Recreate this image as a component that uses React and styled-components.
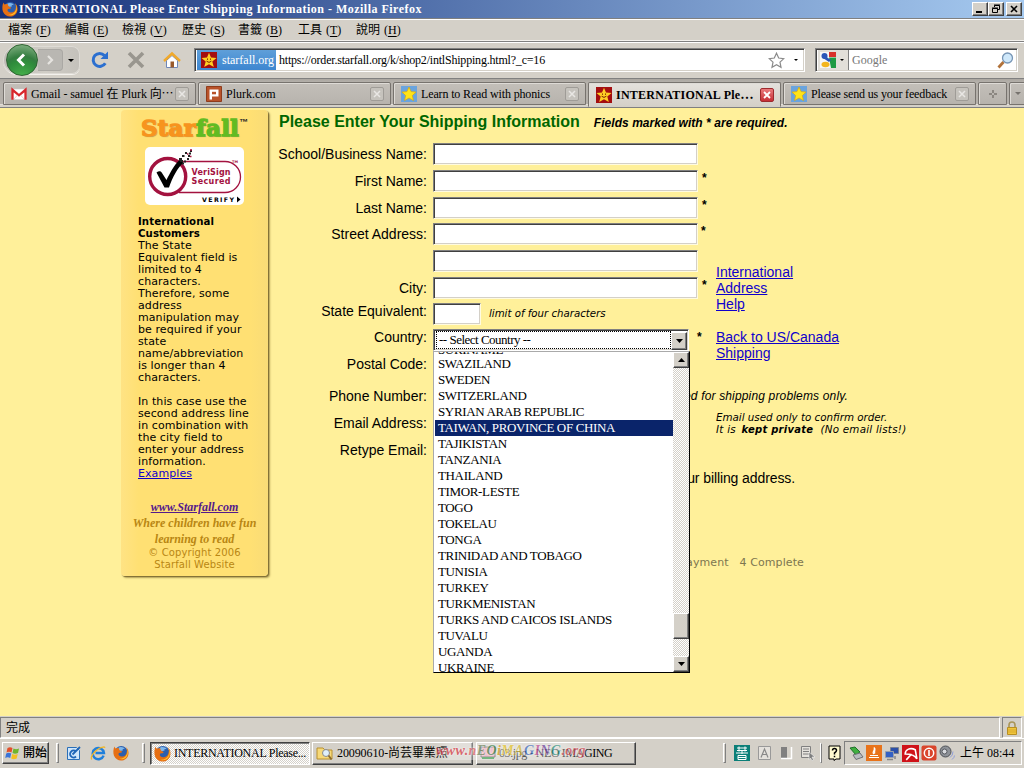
import React from "react";
import styled, { createGlobalStyle, css } from "styled-components";

const SERIF = `"Liberation Serif", "Noto Sans CJK TC", serif`;
const SANS = `"Liberation Sans", "Noto Sans CJK TC", sans-serif`;
const VERDANA = `"DejaVu Sans", "Noto Sans CJK TC", sans-serif`;

const Global = createGlobalStyle`
  * { box-sizing: border-box; }
  html, body { margin: 0; padding: 0; }
  body { width: 1024px; height: 768px; overflow: hidden; background: #d4d0c8; }
  svg { display: block; flex: none; }
`;

const Desktop = styled.div`
  width: 1024px;
  height: 768px;
  display: flex;
  flex-direction: column;
  background: #d4d0c8;
  font: 12px/16px ${SERIF};
  color: #000;
  white-space: nowrap;
  overflow: hidden;
`;

const raised = css`
  border: 1px solid;
  border-color: #fff #404040 #404040 #fff;
  box-shadow: inset -1px -1px 0 #808080;
  background: #d4d0c8;
`;

/* title bar */
const TitleBar = styled.div`
  height: 18px;
  flex: none;
  display: flex;
  align-items: center;
  padding: 0 2px;
  background: linear-gradient(90deg, #16317a, #a6caf0);
  color: #fff;
`;
const TitleText = styled.span`
  flex: 1;
  margin-left: 1px;
  font-weight: bold;
  letter-spacing: 0.48px;
  line-height: 18px;
`;
const CaptionButton = styled.div`
  ${raised}
  width: 16px;
  height: 14px;
  margin-left: ${(p) => p.$gap || 0}px;
  display: flex;
  align-items: center;
  justify-content: center;
`;

/* menu bar */
const MenuBar = styled.div`
  height: 24px;
  flex: none;
  display: flex;
  align-items: center;
  gap: 17px;
  padding-left: 8px;
  border-top: 1px solid #808080;
  border-bottom: 1px solid #808080;
  box-shadow: inset 0 1px 0 #fff, inset 0 -1px 0 #f4f2ee;
`;
const MenuItem = styled.span`
  display: inline-block;
  width: ${(p) => p.$w}px;
  word-spacing: 1px;
  line-height: 20px;
  & u { text-underline-offset: 2px; }
`;

/* navigation bar */
const NavBar = styled.div`
  height: 36px;
  flex: none;
  display: flex;
  align-items: center;
  padding: 0 6px 0 3px;
  box-shadow: inset 0 1px 0 #fff;
`;
const NavButtons = styled.div`
  width: 77px;
  height: 28px;
  margin-right: 2px;
  display: flex;
  align-items: center;
  border-radius: 14px 8px 8px 14px;
  background: linear-gradient(90deg, #bdbab4, #d0cdc6 55%, #c4c1bb);
  box-shadow: inset 0 0 0 1px #dedbd5, 0 1px 0 #f3f1ed;
`;
const BackButton = styled.div`
  width: 32px;
  height: 32px;
  flex: none;
  margin-left: 3px;
  display: flex;
  align-items: center;
  justify-content: center;
  border-radius: 50%;
  border: 1px solid #2e6532;
  background: radial-gradient(circle at 50% 110%, #49b54d, #2f8b3b 48%, #347d40 60%, #8fba8e);
`;
const ForwardButton = styled.div`
  width: 25px;
  height: 22px;
  display: flex;
  align-items: center;
  justify-content: center;
  background: #b9b7b2;
  border: 1px solid #aaa8a4;
  border-left: 0;
  border-radius: 0 4px 4px 0;
`;
const Caret = styled.i`
  width: 0;
  height: 0;
  border: ${(p) => p.$s || 3}px solid transparent;
  border-top-color: ${(p) => p.$c || "#000"};
  border-bottom: 0;
  margin: ${(p) => p.$m || "0"};
`;
const NavIcon = styled.div`
  width: 36px;
  display: flex;
  justify-content: center;
`;
const sunken = css`
  border: 1px solid;
  border-color: #808080 #fff #fff #808080;
  box-shadow: inset 1px 1px 0 #404040, inset -1px -1px 0 #d4d0c8;
  background: #fff;
`;
const LocationBar = styled.div`
  ${sunken}
  width: 611px;
  height: 24px;
  margin: 0 10px 0 4px;
  padding: 2px 6px 2px 2px;
  display: flex;
  align-items: center;
`;
const Identity = styled.div`
  width: 79px;
  height: 20px;
  display: flex;
  align-items: center;
  padding-left: 4px;
  gap: 5px;
  color: #fff;
  background: linear-gradient(#5f9fd9, #3d86d0);
`;
const Url = styled.span`
  flex: 1;
  margin-left: 3px;
  letter-spacing: -0.2px;
`;
const SearchBar = styled.div`
  ${sunken}
  width: 203px;
  height: 24px;
  display: flex;
  align-items: center;
  padding: 2px 3px 2px 2px;
`;
const Engine = styled.div`
  width: 31px;
  height: 20px;
  padding-left: 2px;
  display: flex;
  align-items: center;
  background: #e2dfd9;
  border-right: 1px solid #808080;
`;
const SearchHint = styled.span`
  flex: 1;
  margin-left: 3px;
  color: #777;
`;

/* tab strip */
const TabStrip = styled.div`
  height: 30px;
  flex: none;
  display: flex;
  align-items: flex-start;
  gap: 2px;
  padding: 3px 0 0 3px;
  border-top: 1px solid #808080;
  border-bottom: 1px solid #808080;
  background: linear-gradient(#aaa6a0 0, #b4b0aa 3px, #b4b0aa 25px, #eeece8 25px, #d4d0c8 26px);
`;
const Tab = styled.div`
  width: ${(p) => p.$w || 193}px;
  height: ${(p) => (p.$active ? 25 : 23)}px;
  flex: none;
  display: flex;
  align-items: center;
  justify-content: ${(p) => (p.$center ? "center" : "flex-start")};
  padding: 0 ${(p) => (p.$center ? 0 : 6)}px 0 ${(p) => (p.$center ? 0 : 7)}px;
  border: 1px solid #77736e;
  border-bottom-color: ${(p) => (p.$active ? "#d4d0c8" : "#77736e")};
  border-radius: 2px 2px 0 0;
  box-shadow: inset 1px 1px 0 #dedbd6;
  background: ${(p) => (p.$active ? "linear-gradient(#e4e1dc, #d4d0c8)" : "linear-gradient(#c3bfb9, #b7b3ad)")};
`;
const TabLabel = styled.span`
  flex: 1;
  margin-left: 4px;
  overflow: hidden;
  font-weight: ${(p) => (p.$bold ? "bold" : "normal")};
  letter-spacing: ${(p) => p.$ls || 0}px;
`;
const TabClose = styled.div`
  width: 14px;
  height: 14px;
  flex: none;
  display: flex;
  align-items: center;
  justify-content: center;
  border-radius: 2px;
  border: 1px solid ${(p) => (p.$active ? "#9d2a2d" : "#9f9c97")};
  background: ${(p) => (p.$active ? "linear-gradient(#ea7a7c, #c62e34)" : "#c6c3bd")};
`;

/* page */
const Page = styled.div`
  height: 608px;
  flex: none;
  display: flex;
  align-items: flex-start;
  padding: 2px 0 0 121px;
  background: #fff09a;
  overflow: hidden;
`;
const Sidebar = styled.div`
  width: 147px;
  height: 466px;
  margin-right: 11px;
  display: flex;
  flex-direction: column;
  align-items: center;
  border-radius: 4px;
  background: linear-gradient(90deg, #ffe384, #ffe073 12%, #ffe073 88%, #f9dc77);
  box-shadow: 1px 1px 1px #7d6c34, 2px 2px 2px #b9a75d;
`;
const Brand = styled.div`
  display: flex;
  align-items: flex-start;
  height: 37px;
  padding: 4px 0 0 0;
  font: 900 23px/27px "DejaVu Serif", serif;
  letter-spacing: 0.2px;
  color: #f7941e;
  -webkit-text-stroke: 1.3px currentColor;
  text-shadow: 1px 1px 1px #b59b4c;
`;
const BrandGreen = styled.span`
  color: #62bb22;
`;
const Trade = styled.span`
  font: bold 9px/16px ${SANS};
  letter-spacing: 0;
  color: #222;
  -webkit-text-stroke: 0;
  text-shadow: none;
`;
const Seal = styled.div`
  width: 99px;
  height: 58px;
  border-radius: 5px;
  background: #fff;
`;
const SideText = styled.div`
  align-self: stretch;
  margin: 11px 0 0 17px;
  font: 11px/12px ${VERDANA};
  letter-spacing: 0.08px;
  & p { margin: 0 0 12px; }
  & b { font-size: 10.2px; }
`;
const Link = styled.a`
  color: ${(p) => (p.$visited ? "#551a8b" : "#0f00cc")};
  text-decoration: underline;
`;
const Motto = styled.div`
  margin-top: 7px;
  text-align: center;
  font: italic bold 12px/16px ${SERIF};
  color: #b98713;
`;
const Copyright = styled.div`
  text-align: center;
  font: 10px/12px ${VERDANA};
  letter-spacing: 0.1px;
  color: #b98713;
`;

const FormColumn = styled.div`
  width: 437px;
  font: 14px/16px ${SANS};
`;
const Heading = styled.div`
  height: 33px;
  display: flex;
  align-items: baseline;
  font: bold 16px/23px ${SANS};
  color: #006600;
`;
const Required = styled.span`
  margin-left: 14px;
  font: italic bold 12px/16px ${SANS};
  letter-spacing: 0.05px;
  color: #000;
`;
const Row = styled.div`
  height: ${(p) => p.$h}px;
  display: flex;
  align-items: flex-start;
`;
const Label = styled.label`
  width: 148px;
  flex: none;
  margin-right: 6px;
  padding-top: ${(p) => p.$t ?? 3}px;
  display: flex;
  justify-content: flex-end;
`;
const Input = styled.div`
  ${sunken}
  width: ${(p) => p.$w || 265}px;
  height: 22px;
  flex: none;
  border-color: #808080 #fffbe0 #fffbe0 #808080;
`;
const Star = styled.span`
  margin-left: ${(p) => p.$x || 4}px;
  font: bold 12px/16px ${SANS};
`;
const Hint = styled.span`
  margin-left: 8px;
  font: italic 10.2px/21px ${VERDANA};
`;
const Trailing = styled.span`
  width: ${(p) => p.$w}px;
  flex: none;
  padding-top: ${(p) => p.$t || 0}px;
  display: flex;
  justify-content: flex-end;
  white-space: pre;
  font: ${(p) => p.$font || "inherit"};
  letter-spacing: ${(p) => p.$ls || 0}px;
  color: ${(p) => p.$c || "#000"};
`;

/* country list */
const Select = styled.div`
  ${sunken}
  position: relative;
  width: 256px;
  height: 22px;
  flex: none;
  padding: 2px 1px 2px 2px;
  display: flex;
`;
const SelectValue = styled.div`
  flex: 1;
  padding-left: 2px;
  border: 1px dotted #000;
  font: 13px/16px ${SERIF};
  letter-spacing: -0.5px;
  margin: -1px 0;
`;
const ScrollButton = styled.div`
  ${raised}
  width: 16px;
  height: ${(p) => p.$h || 16}px;
  flex: none;
  display: flex;
  align-items: center;
  justify-content: center;
`;
const Popup = styled.div`
  position: absolute;
  left: -1px;
  top: 21px;
  z-index: 2;
  width: 257px;
  height: 322px;
  display: flex;
  background: #fff;
  border: 1px solid #000;
  border-top-color: #aaa;
  border-left-color: #aaa;
`;
const Options = styled.div`
  flex: 1;
  height: 320px;
  overflow: hidden;
  padding-left: 1px;
  & > :first-child { margin-top: -12px; line-height: 19px; }
`;
const Option = styled.div`
  height: 16px;
  padding-left: 3px;
  font: 13px/16px ${SERIF};
  letter-spacing: -0.36px;
  color: ${(p) => (p.$on ? "#fff" : "#000")};
  background: ${(p) => (p.$on ? "#0a246a" : "transparent")};
`;
const Scrollbar = styled.div`
  width: 16px;
  display: flex;
  flex-direction: column;
  background: repeating-conic-gradient(#fff 0 25%, #d4d0c8 0 50%) 0 0 / 2px 2px;
`;
const Track = styled.div`
  height: ${(p) => p.$h}px;
`;

const Notes = styled.div`
  padding-top: 154px;
  display: flex;
  flex-direction: column;
  font: 14px/16px ${SANS};
`;
const NoteLinks = styled.div`
  height: ${(p) => p.$h}px;
`;
const EmailNote = styled.div`
  font: italic 10.3px/12px ${VERDANA};
`;
const Private = styled.div`
  letter-spacing: 0.26px;
  & b { font-size: 10px; margin-left: 2px; }
`;

/* status and task bars */
const StatusBar = styled.div`
  height: 22px;
  flex: none;
  display: flex;
  gap: 2px;
  padding-top: 1px;
`;
const StatusCell = styled.div`
  height: 21px;
  width: ${(p) => p.$w}px;
  padding-left: ${(p) => p.$pl}px;
  display: flex;
  align-items: center;
  border: 1px solid;
  border-color: #808080 #fff #fff #808080;
`;
const TaskBar = styled.div`
  position: relative;
  height: 30px;
  flex: none;
  display: flex;
  align-items: center;
  padding: 0 2px 1px;
  border-top: 1px solid #fff;
`;
const StartButton = styled.div`
  ${raised}
  width: 47px;
  height: 22px;
  padding-left: 2px;
  display: flex;
  align-items: center;
  gap: 2px;
  font: 500 12px/18px ${SERIF};
`;
const Grip = styled.i`
  width: ${(p) => p.$w || 3}px;
  height: 20px;
  margin: 0 ${(p) => p.$r}px 0 ${(p) => p.$l}px;
  border: 1px solid;
  border-color: #fff #808080 #808080 #fff;
`;
const QuickLaunch = styled.div`
  display: flex;
  width: 63px;
  justify-content: space-between;
`;
const TaskButton = styled.div`
  ${raised}
  width: ${(p) => p.$w}px;
  height: 23px;
  margin-right: ${(p) => p.$mr || 0}px;
  display: flex;
  align-items: center;
  gap: 3px;
  padding-left: 3px;
  overflow: hidden;
  letter-spacing: ${(p) => p.$ls || 0}px;
  ${(p) =>
    p.$on &&
    css`
      border-color: #404040 #fff #fff #404040;
      box-shadow: inset 1px 1px 0 #808080;
      background: repeating-conic-gradient(#fff 0 25%, #d4d0c8 0 50%) 0 0 / 2px 2px;
    `}
`;
const Watermark = styled.div`
  position: absolute;
  left: 435px;
  top: 3px;
  padding: 0 1px;
  font: italic bold 14px/18px ${SERIF};
  letter-spacing: 0.4px;
  background: linear-gradient(90deg, transparent, rgba(255, 255, 255, 0.45) 10%, rgba(255, 255, 255, 0.45) 85%, transparent);
  text-shadow: 0 0 2px #fff, 0 0 2px #fff;
  opacity: 0.75;
`;
const Ink = styled.span`
  color: ${(p) => p.$c};
`;
const LangIcons = styled.div`
  display: flex;
  align-items: center;
  gap: 6px;
`;
const Tray = styled.div`
  width: 178px;
  height: 24px;
  margin-left: 2px;
  padding-left: 3px;
  display: flex;
  align-items: center;
  gap: 2px;
  border: 1px solid;
  border-color: #808080 #fff #fff #808080;
`;
const Clock = styled.span`
  margin-left: 3px;
`;

/* icons */
const Svg = ({ s = 16, w, h, vb = "0 0 16 16", children }) => (
  <svg width={w || s} height={h || s} viewBox={vb} fill="none">
    {children}
  </svg>
);
const Firefox = ({ s = 16 }) => (
  <Svg s={s}>
    <circle cx="8.2" cy="7.6" r="6.6" fill="#2c5fae" />
    <path d="M5 3c2-2 6-1 7 1-2-.5-3 .5-2 1.500-2 0-3 1-4 0z" fill="#7fb7ea" />
    <path d="M1.500 1.500C.2 4 0 8 1 10.800 2.500 14.500 6 16 9.200 15.500c4-.6 6.600-4 6.300-8C15.400 5 14.300 3.200 13 2.200c.8 1.500 1.200 3 .8 4.500-.2 3-2.300 5-5 4.800C6.500 11.300 5 10 5.600 8.400c.6-.8 1.800-.3 2.900-.8.800-.5.5-1.200-.4-1.600C6.800 5.800 6 5 6 3.400 4.800 2.600 3.500 3 2.600 3.600 2 3 1.700 2.300 1.500 1.500z" fill="#e66f13" />
    <path d="M13 2.200c2.300 3 2.500 7.300.2 10-1.800 2-4.800 2.600-7.200 1.600 3.500.3 6.500-1.300 7.800-4.500.9-2.500.5-5-.8-7.100z" fill="#ffc52e" />
  </Svg>
);
const RedStar = () => (
  <Svg>
    <path d="M0 0h16v16H0z" fill="#a40e10" />
    <path d="M8 .8l2 4.700 5.500.4-4.200 3.600 1.500 5.500L8 12.200 3.200 15l1.500-5.500L.5 5.900 6 5.500z" fill="#ffcf24" />
    <path d="M6.500 6.500v1.300M9.500 6.500v1.300M5.600 9.200Q8 11.600 10.400 9.200" stroke="#7a2500" />
  </Svg>
);
const BlueStar = () => (
  <Svg>
    <path d="M0 0h16v16H0z" fill="#6aa4de" />
    <path d="M8 1l2.100 4.600 5 .5-3.800 3.500 1.200 5L8 12l-4.500 2.600 1.200-5L.9 6.100l5-.5z" fill="#ffe418" stroke="#d9a812" strokeWidth=".7" />
  </Svg>
);
const GmailIcon = () => (
  <Svg>
    <path d="M1 3h14v10.500H1z" fill="#fff" stroke="#c9c9c9" strokeWidth=".6" />
    <path d="M1.500 13.700V3.800L8 9.300l6.500-5.500v9.900" stroke="#d8262c" strokeWidth="2.300" />
    <path d="M3 13l3.500-4M13 13L9.500 9" stroke="#ddb9b9" strokeWidth=".7" />
  </Svg>
);
const PlurkIcon = () => (
  <Svg>
    <path d="M.5.500h15v15H.5z" fill="#b9532a" stroke="#8f3c1c" />
    <path d="M3.500 3.500h9v7H6v3H3.500z" fill="#fff" />
    <path d="M6 5.800h4v2.500H6z" fill="#b9532a" />
  </Svg>
);
const Cross = ({ c, w = 1.4, s = 8 }) => (
  <Svg s={s} vb="0 0 8 8">
    <path d="M1 1l6 6M7 1L1 7" stroke={c} strokeWidth={w} />
  </Svg>
);
const IconE = () => (
  <Svg>
    <path d="M13.600 10.600A5.600 5.600 0 1 1 13.900 7.900H5.500" stroke="#1f7fdb" strokeWidth="2.500" />
    <path d="M1.800 14.500C0 12 4 6.500 9 3.500c3-1.700 5.600-2 6-.7" stroke="#f1b72c" strokeWidth="1.300" />
  </Svg>
);
const SealArt = () => (
  <Svg w={99} h={58} vb="0 0 99 58">
    <path d="M34 14.500h46a15.500 15.500 0 0 1 0 31H34" stroke="#a3123f" strokeWidth="1.300" />
    <circle cx="22.700" cy="29.500" r="18" fill="#fff" stroke="#a3123f" strokeWidth="3.400" />
    <path d="M11.500 25.500c2.500-2 4.500-1.500 5.500.5l4.500 7C25 26 29 18 34.500 13l4 2.500C32.500 21 27.500 30 24 40.500h-4.500z" fill="#000" />
    <path d="M34 12h3M37 9h2.500M40 6h2M43 9h2M42 12h2M45 4h2M39 14.500h2M44 6.500h2M37 16.500h2M35 14h3" stroke="#222" strokeWidth="2" />
    <path d="M45 3h2M42 7h1.500M45 9.500h1.500" stroke="#a3123f" strokeWidth="1.500" />
    <g fontFamily="DejaVu Sans" fontWeight="bold" fill="#a3123f">
      <text x="46.500" y="28" fontSize="8" textLength="39">VeriSign</text>
      <text x="46.500" y="37.300" fontSize="8" textLength="39">Secured</text>
      <text x="87" y="16" fontSize="3.500">TM</text>
      <text x="57" y="55" fontSize="6.300" fill="#000" textLength="32">VERIFY</text>
    </g>
    <path d="M92 49.500l3.500 3-3.500 3z" fill="#000" />
  </Svg>
);

const UpArrow = () => (
  <Svg w={7} h={4} vb="0 0 7 4"><path d="M0 4l3.500-4L7 4z" fill="#000" /></Svg>
);
const DownArrow = () => (
  <Svg w={7} h={4} vb="0 0 7 4"><path d="M0 0l3.500 4L7 0z" fill="#000" /></Svg>
);

const countries = [
  "SURINAME", "SWAZILAND", "SWEDEN", "SWITZERLAND", "SYRIAN ARAB REPUBLIC",
  "TAIWAN, PROVINCE OF CHINA", "TAJIKISTAN", "TANZANIA", "THAILAND", "TIMOR-LESTE",
  "TOGO", "TOKELAU", "TONGA", "TRINIDAD AND TOBAGO", "TUNISIA", "TURKEY",
  "TURKMENISTAN", "TURKS AND CAICOS ISLANDS", "TUVALU", "UGANDA", "UKRAINE",
];

const menus = [
  ["檔案", "F", 40], ["編輯", "E", 40], ["檢視", "V", 43], ["歷史", "S", 39],
  ["書籤", "B", 43], ["工具", "T", 41], ["說明", "H", 43],
];

const tabs = [
  { icon: <GmailIcon />, label: "Gmail - samuel 在 Plurk 向⋯", ls: -0.1 },
  { icon: <PlurkIcon />, label: "Plurk.com", ls: 0 },
  { icon: <BlueStar />, label: "Learn to Read with phonics", ls: -0.14 },
  { icon: <RedStar />, label: "INTERNATIONAL Ple⋯", ls: 0.25, active: true },
  { icon: <BlueStar />, label: "Please send us your feedback", ls: -0.16 },
];

const mark = [
  ["www.", "#d8434e"], ["n", "#e06a70"], ["E", "#7a8f6a"], ["O", "#4b8e58"], ["i", "#d3a52b"],
  ["M", "#e7c93a"], ["A", "#d9c24a"], ["G", "#4d76c4"], ["I", "#c45aa0"], ["N", "#7a4fa6"],
  ["G", "#3c9a8a"], [".org", "#cf5560"],
];

export default function App() {
  return (
    <Desktop>
      <Global />
      <TitleBar>
        <Firefox />
        <TitleText>INTERNATIONAL Please Enter Shipping Information - Mozilla Firefox</TitleText>
        <CaptionButton>
          <Svg s={10} vb="0 0 10 10"><path d="M1 8h6" stroke="#000" strokeWidth="2" /></Svg>
        </CaptionButton>
        <CaptionButton>
          <Svg s={10} vb="0 0 10 10"><path d="M3.500 3V1.500h5v4H7M3 1h6M1.500 4.500h5v4h-5zM1 4h6" stroke="#000" /></Svg>
        </CaptionButton>
        <CaptionButton $gap={2}><Cross c="#000" w={1.600} /></CaptionButton>
      </TitleBar>

      <MenuBar>
        {menus.map(([t, k, w]) => (
          <MenuItem key={k} $w={w}>{t} (<u>{k}</u>)</MenuItem>
        ))}
      </MenuBar>

      <NavBar>
        <NavButtons>
          <BackButton>
            <Svg s={18} vb="0 0 18 18"><path d="M11 3.500L5.500 9l5.500 5.500" stroke="#fff" strokeWidth="3" /></Svg>
          </BackButton>
          <ForwardButton>
            <Svg s={12} vb="0 0 12 12"><path d="M4 2l4 4-4 4" stroke="#e6e4e0" strokeWidth="2.200" /></Svg>
          </ForwardButton>
          <Caret $m="0 0 0 5px" />
        </NavButtons>
        <NavIcon>
          <Svg s={20} vb="0 0 20 20">
            <path d="M15.300 13.200A6.500 6.500 0 1 1 14.500 5.500" stroke="#2b6fd0" strokeWidth="3" />
            <path d="M18 1.500V9h-7.500z" fill="#2b6fd0" />
          </Svg>
        </NavIcon>
        <NavIcon>
          <Svg s={18} vb="0 0 18 18"><path d="M2 2l14 14M16 2L2 16" stroke="#99968f" strokeWidth="3.600" /></Svg>
        </NavIcon>
        <NavIcon>
          <Svg s={18} vb="0 0 18 18">
            <path d="M3.500 9.500L9 4.500l5.500 5v7h-11z" fill="#fff" stroke="#6f87b8" />
            <path d="M1 10L9 2.500l8 7.500" stroke="#f0a92c" strokeWidth="2.400" />
            <path d="M7.500 10.500h3.500v6H7.500z" fill="#9a5a2a" />
          </Svg>
        </NavIcon>
        <LocationBar>
          <Identity><RedStar />starfall.org</Identity>
          <Url>https://order.starfall.org/k/shop2/intlShipping.html?_c=16</Url>
          <Svg s={17} vb="0 0 17 17">
            <path d="M8.500 1.200l2.200 4.800 5.100.6-3.800 3.500 1 5.200-4.500-2.600L4 15.300l1-5.200L1.200 6.600l5.100-.6z" stroke="#8a8a8a" strokeWidth="1.200" />
          </Svg>
          <Caret $s={2.5} $m="0 0 0 9px" />
        </LocationBar>
        <SearchBar>
          <Engine>
            <Svg>
              <path d="M0 0h16v16H0z" fill="#f6f6f6" />
              <path d="M9 0h7v5H9z" fill="#d8312b" />
              <path d="M9 5.500h7V16h-5z" fill="#1f9b45" />
              <circle cx="4.500" cy="4" r="3" fill="#2a56b8" />
              <path d="M5 4l6 4-2 2-6-4z" fill="#2a56b8" />
              <ellipse cx="5.500" cy="12.500" rx="4" ry="2.800" fill="#f3b51e" />
            </Svg>
            <Caret $s={2} $m="0 0 0 4px" />
          </Engine>
          <SearchHint>Google</SearchHint>
          <Svg s={17} vb="0 0 17 17">
            <path d="M1.500 15.500L6.500 10" stroke="#b1723a" strokeWidth="2.800" />
            <circle cx="10.500" cy="6" r="5" fill="#cfe8fa" stroke="#7795b5" strokeWidth="1.300" />
          </Svg>
        </SearchBar>
      </NavBar>

      <TabStrip>
        {tabs.map((t) => (
          <Tab key={t.label} $active={t.active}>
            {t.icon}
            <TabLabel $bold={t.active} $ls={t.ls}>{t.label}</TabLabel>
            <TabClose $active={t.active}><Cross c={t.active ? "#fff" : "#e9e7e4"} w={t.active ? 1.800 : 1.500} /></TabClose>
          </Tab>
        ))}
        <Tab $w={29} $center>
          <Svg s={10} vb="0 0 10 10"><path d="M5 1v8M1 5h8" stroke="#8b8781" strokeWidth="2" strokeDasharray="3 2" /></Svg>
        </Tab>
        <Tab $w={20} $center><Caret $c="#77736e" $m="0 3px 0 0" /></Tab>
      </TabStrip>

      <Page>
        <Sidebar>
          <Brand>Star<BrandGreen>fall</BrandGreen><Trade>™</Trade></Brand>
          <Seal><SealArt /></Seal>
          <SideText>
            <p>
              <b>International<br />Customers</b><br />The State<br />Equivalent field is<br />limited to 4<br />
              characters.<br />Therefore, some<br />address<br />manipulation may<br />be required if your<br />
              state<br />name/abbreviation<br />is longer than 4<br />characters.
            </p>
            <p>
              In this case use the<br />second address line<br />in combination with<br />the city field to<br />
              enter your address<br />information.<br /><Link>Examples</Link>
            </p>
          </SideText>
          <Motto>
            <Link $visited>www.Starfall.com</Link><br />Where children have fun<br />learning to read
          </Motto>
          <Copyright>© Copyright 2006<br />Starfall Website</Copyright>
        </Sidebar>

        <FormColumn>
          <Heading>
            Please Enter Your Shipping Information
            <Required>Fields marked with * are required.</Required>
          </Heading>
          <Row $h={27}><Label>School/Business Name:</Label><Input /></Row>
          <Row $h={27}><Label>First Name:</Label><Input /><Star>*</Star></Row>
          <Row $h={26}><Label>Last Name:</Label><Input /><Star>*</Star></Row>
          <Row $h={27}><Label>Street Address:</Label><Input /><Star $x={3}>*</Star></Row>
          <Row $h={27}><Label /><Input /></Row>
          <Row $h={26}><Label>City:</Label><Input /><Star>*</Star></Row>
          <Row $h={26}><Label $t={0}>State Equivalent:</Label><Input $w={48} /><Hint>limit of four characters</Hint></Row>
          <Row $h={27}>
            <Label $t={0}>Country:</Label>
            <Select>
              <SelectValue>-- Select Country --</SelectValue>
              <ScrollButton $h={18}><DownArrow /></ScrollButton>
              <Popup>
                <Options>
                  {countries.map((c) => (
                    <Option key={c} $on={c.startsWith("TAIWAN")}>{c}</Option>
                  ))}
                </Options>
                <Scrollbar>
                  <ScrollButton><UpArrow /></ScrollButton>
                  <Track $h={245} />
                  <ScrollButton $h={26} />
                  <Track $h={17} />
                  <ScrollButton><DownArrow /></ScrollButton>
                </Scrollbar>
              </Popup>
            </Select>
            <Star $x={8}>*</Star>
          </Row>
          <Row $h={32}><Label $t={0}>Postal Code:</Label></Row>
          <Row $h={27}>
            <Label $t={0}>Phone Number:</Label>
            <Trailing $w={415} $font={`italic 12px/16px ${SANS}`} $ls={0.16}>Used for shipping problems only.</Trailing>
          </Row>
          <Row $h={27}><Label $t={0}>Email Address:</Label></Row>
          <Row $h={28}><Label $t={0}>Retype Email:</Label></Row>
          <Row $h={84}><Trailing $w={516} $ls={-0.1}>This is also your billing address.</Trailing></Row>
          <Row $h={20}>
            <Trailing $w={525} $t={1} $font={`11px/16px ${VERDANA}`} $c="#7d7650" $ls={0.1}>3 Payment   4 Complete</Trailing>
          </Row>
        </FormColumn>

        <Notes>
          <NoteLinks $h={65}><Link>International<br />Address<br />Help</Link></NoteLinks>
          <NoteLinks $h={82}><Link>Back to US/Canada<br />Shipping</Link></NoteLinks>
          <EmailNote>
            Email used only to confirm order.
            <Private>It is <b>kept private</b>&nbsp; (No email lists!)</Private>
          </EmailNote>
        </Notes>
      </Page>

      <StatusBar>
        <StatusCell $w={1000} $pl={5}>完成</StatusCell>
        <StatusCell $w={20} $pl={2}>
          <Svg s={14} vb="0 0 14 14">
            <path d="M4 7V4a3 3 0 0 1 6 0v3" stroke="#a9955a" strokeWidth="1.600" />
            <path d="M2.500 6.500h9v7h-9z" fill="#f0c63c" stroke="#b88f22" />
            <path d="M3 9h8M3 11h8" stroke="#d9a92c" />
          </Svg>
        </StatusCell>
      </StatusBar>

      <TaskBar>
        <StartButton>
          <Svg>
            <path d="M2.500 3q2.500-1.500 5 0L6.500 7.500q-2.500-1.500-5 0z" fill="#e2502b" />
            <path d="M8.500 3.500q2.500 1.300 5.500 0L13 8q-3 1.300-5.500 0z" fill="#6fb52c" />
            <path d="M1.200 8.500q2.500-1.500 5 0L5.200 13q-2.500-1.500-5 0z" fill="#3a74d8" />
            <path d="M7.200 9q2.500 1.300 5.500 0l-1 4.500q-3 1.300-5.500 0z" fill="#f4c022" />
          </Svg>
          開始
        </StartButton>
        <Grip $l={7} $r={7} />
        <QuickLaunch>
          <Svg>
            <path d="M1.500 2.500h9l3 3v9h-12z" fill="#cfe6fb" stroke="#2a6fb8" />
            <path d="M10 6.500a3.500 3.500 0 1 0 0 5M6.500 9.500L14 2" stroke="#1f66b8" strokeWidth="1.800" />
          </Svg>
          <IconE />
          <Firefox />
        </QuickLaunch>
        <Grip $l={13} $r={5} />
        <TaskButton $w={160} $mr={2} $on $ls={-0.27}>
          <Firefox s={17} />INTERNATIONAL Please...
        </TaskButton>
        <TaskButton $w={161} $mr={3} $ls={-0.1}>
          <Svg s={18} vb="0 0 18 18">
            <path d="M1 4h6l2 2h7v9H1z" fill="#f7d978" stroke="#b8902f" />
            <circle cx="10" cy="9" r="3.500" fill="#dff0fb" stroke="#8b8b8b" />
            <path d="M12.500 11.500l3 4" stroke="#8b6b2f" strokeWidth="1.800" />
          </Svg>
          20090610-尚芸畢業照
        </TaskButton>
        <TaskButton $w={160} $ls={-0.4}>
          <Svg><path d="M1 2h14v10H1z" fill="#e8a0b4" stroke="#555" /><path d="M2 13h12" stroke="#2f8f3f" strokeWidth="2" /></Svg>
          03.jpg - NEO IMAGING
        </TaskButton>
        <Watermark>
          {mark.map(([t, c], i) => (
            <Ink key={i} $c={c}>{t}</Ink>
          ))}
        </Watermark>
        <Grip $l={87} $r={8} />
        <LangIcons>
          <Svg>
            <path d="M0 0h16v16H0z" fill="#0b7f78" />
            <path d="M3 3h10M3 5.500h10M5 1.500v5M11 1.500v5M2 8h12M8 6v3M4 10.500h8v4H4zM4 12.500h8" stroke="#fff" />
          </Svg>
          <Svg>
            <path d="M2.500 1.500h12v13h-12z" fill="#e4e1dc" stroke="#999" />
            <path d="M5 12.500L8.500 4l3.500 8.500M6.200 9.500h4.600" stroke="#888" strokeWidth="1.200" />
          </Svg>
          <Svg><path d="M3 2h6v11H3z" fill="#808080" /><path d="M13.500 2v11.500H3" stroke="#fff" strokeWidth="1.500" /></Svg>
          <Svg>
            <path d="M1.500 1.500h9v11h-9z" fill="#e4e1dc" stroke="#808080" />
            <path d="M3 4h6M3 6.500h6M3 9h6" stroke="#808080" />
            <path d="M9 7l6 5h-3l1.500 3-1.500.7L10.500 13 9 14.500z" fill="#808080" stroke="#fff" strokeWidth=".5" />
          </Svg>
        </LangIcons>
        <Grip $w={2} $l={4} $r={6} />
        <Svg w={14} h={16} vb="0 0 14 16">
          <path d="M1 1h11v13H8l-2 1.500V14H1z" fill="#fffbd0" stroke="#000" />
          <path d="M4.500 5.500q0-2 2-2t2 2q0 1.200-2 2.500V9.500M6.500 10.700v1.500" stroke="#000" strokeWidth="1.500" />
        </Svg>
        <Tray>
          <Svg>
            <path d="M2 3l5-1 5 5-4 3z" fill="#3fae3f" stroke="#21702a" />
            <path d="M5 10l7-2 3 4-7 2.500z" fill="#b9bcc0" stroke="#6d7075" />
          </Svg>
          <Svg>
            <path d="M0 0h16v16H0z" fill="#e8731a" />
            <path d="M3 12.500h10M4 10.500h8M8 9c-3-2 2-3.500 0-6.500 3 2-1 4 1 6" stroke="#fff" strokeWidth="1.200" />
          </Svg>
          <Svg>
            <path d="M6.500 2.500h8v6h-8z" fill="#2b4fa8" stroke="#7a8190" />
            <path d="M1.500 6.500h8v6h-8z" fill="#3461c4" stroke="#98a0ad" />
            <path d="M3 14.500h6M11 11v3" stroke="#888" strokeWidth="1.500" />
          </Svg>
          <Svg s={17}>
            <path d="M0 0h16v16H0z" fill="#cf1219" />
            <path d="M3 8.500C3 4 8 2 12.500 4.500L14 13C12 9.500 8 8.500 3 8.500zM9 8.500L4 14" stroke="#fff" strokeWidth="1.500" />
          </Svg>
          <Svg>
            <rect x=".5" y=".5" width="15" height="15" rx="2" fill="#d9452c" />
            <circle cx="8" cy="8" r="4.700" stroke="#fff" strokeWidth="1.500" />
            <path d="M8 5v6" stroke="#fff" strokeWidth="1.600" />
          </Svg>
          <Svg>
            <circle cx="6.500" cy="6.500" r="5.500" fill="#8e9298" stroke="#4d5056" />
            <circle cx="5.500" cy="6.500" r="2.500" fill="#d8dade" stroke="#55585e" />
            <path d="M11 12.500q3-2 3-6M13 14.500q2.500-2 2.500-4" stroke="#8f9fd8" />
          </Svg>
          <Clock>上午 08:44</Clock>
        </Tray>
      </TaskBar>
    </Desktop>
  );
}
